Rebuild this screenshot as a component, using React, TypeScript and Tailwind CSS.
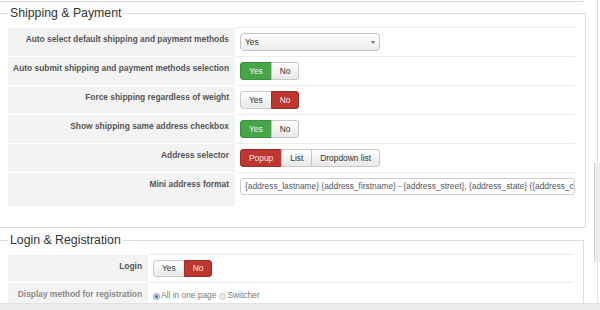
import React from "react";

type Opt = { label: string; active?: "green" | "red" };

function BtnGroup({ options, h = "h-[18px]" }: { options: Opt[]; h?: string }) {
  return (
    <div className="flex">
      {options.map((o, i) => {
        const first = i === 0;
        const last = i === options.length - 1;
        const color =
          o.active === "green"
            ? "bg-[#46a546] border-[#3d8f3d] text-[#eef7ee]"
            : o.active === "red"
            ? "bg-[#bd362f] border-[#a02d27] text-[#fbecec]"
            : "bg-gradient-to-b from-white to-[#e8e8e8] border-[#c8c8c8] text-[#333]";
        return (
          <span
            key={o.label}
            className={`${h} ${color} flex items-center border px-[8px] text-[8.4px] leading-none ${
              first ? "rounded-l-[3px]" : "-ml-px"
            } ${last ? "rounded-r-[3px]" : ""}`}
          >
            {o.label}
          </span>
        );
      })}
    </div>
  );
}

function Row({
  label,
  children,
  labelW = "w-[227px]",
  last = false,
  dim = false,
}: {
  label: string;
  children: React.ReactNode;
  labelW?: string;
  last?: boolean;
  dim?: boolean;
}) {
  return (
    <div className="flex">
      <div
        className={`${labelW} shrink-0 border-t border-white bg-[#f3f3f3] pr-[6px] pt-[6px] text-right text-[8.4px] font-bold leading-[10px] ${
          dim ? "text-[#8c8c8c]" : "text-[#565656]"
        }`}
      >
        {label}
      </div>
      <div className={`flex-1 border-t border-[#ebebeb] pl-[5px] pt-[5px] ${last ? "pb-[11px]" : "pb-[5px]"}`}>
        {children}
      </div>
    </div>
  );
}

function Legend({ children }: { children: React.ReactNode }) {
  return (
    <legend className="px-[2px] text-[12.3px] leading-[14px] text-[#333]">{children}</legend>
  );
}

function Radio({ checked }: { checked?: boolean }) {
  return (
    <span
      className={`mt-[3px] mr-[1px] flex h-[7px] w-[7px] items-center justify-center rounded-full border ${
        checked ? "border-[#8a9bb0] bg-[#dfe7f0]" : "border-[#c8c8c8] bg-[#eeeeee]"
      }`}
    >
      {checked && <span className="h-[3px] w-[3px] rounded-full bg-[#3d6aa0]" />}
    </span>
  );
}

export default function App() {
  return (
    <div className="flex h-[310px] w-[600px] flex-col overflow-hidden bg-white font-['Liberation_Sans',Arial,sans-serif]">
      <div className="flex min-h-0 flex-1">
        <div className="flex-1 overflow-hidden">
          <div className="h-[2px] w-[584px] border-b border-r border-[#dcdcdc]" />

          <fieldset className="mt-[4px] w-[584px] border border-l-0 border-[#dcdcdc] pl-[8px] pr-[10px] pt-[7px] pb-[21px]">
            <Legend>Shipping &amp; Payment</Legend>
            <Row label="Auto select default shipping and payment methods">
              <div className="flex h-[18px] w-[140px] items-center justify-between rounded-[4px] border border-[#c4c4c4] bg-gradient-to-b from-white to-[#ececec] pl-[4px] pr-[4px] text-[8.4px] text-[#333]">
                <span>Yes</span>
                <span className="h-0 w-0 border-x-[2.5px] border-t-[3px] border-x-transparent border-t-[#777]" />
              </div>
            </Row>
            <Row label="Auto submit shipping and payment methods selection">
              <BtnGroup options={[{ label: "Yes", active: "green" }, { label: "No" }]} />
            </Row>
            <Row label="Force shipping regardless of weight">
              <BtnGroup options={[{ label: "Yes" }, { label: "No", active: "red" }]} />
            </Row>
            <Row label="Show shipping same address checkbox">
              <BtnGroup options={[{ label: "Yes", active: "green" }, { label: "No" }]} />
            </Row>
            <Row label="Address selector">
              <BtnGroup
                options={[{ label: "Popup", active: "red" }, { label: "List" }, { label: "Dropdown list" }]}
              />
            </Row>
            <Row label="Mini address format" last>
              <div className="flex h-[17px] w-[335px] items-center overflow-hidden whitespace-nowrap rounded-[3px] border border-[#cfcfcf] bg-white pl-[4px] text-[8.4px] text-[#555]">
                {"{address_lastname} {address_firstname} - {address_street}, {address_state} ({address_country})"}
              </div>
            </Row>
          </fieldset>

          <fieldset className="mt-[5px] w-[584px] border border-l-0 border-[#dcdcdc] pl-[8px] pr-[10px] pt-[7px] pb-[20px]">
            <Legend>Login &amp; Registration</Legend>
            <Row label="Login" labelW="w-[140px]">
              <BtnGroup h="h-[17px]" options={[{ label: "Yes" }, { label: "No", active: "red" }]} />
            </Row>
            <Row label="Display method for registration" labelW="w-[140px]" dim>
              <div className="flex items-center pt-[2px] text-[8.4px] leading-[10px] text-[#7a7a7a]">
                <Radio checked />
                <span className="mr-[3px]">All in one page</span>
                <Radio />
                <span>Switcher</span>
              </div>
            </Row>
          </fieldset>
        </div>

        <div className="flex w-[6px] shrink-0 flex-col">
          <div className="ml-[3px] h-[163px] w-px bg-[#dedede]" />
          <div className="h-[99px] border-l border-[#d4d4d4] bg-[#ececec]" />
          <div className="ml-[3px] w-px flex-1 bg-[#e4e4e4]" />
        </div>
      </div>
      <div className="h-[7px] shrink-0 border-t border-[#e2e2e2] bg-[#ebebeb]" />
    </div>
  );
}
